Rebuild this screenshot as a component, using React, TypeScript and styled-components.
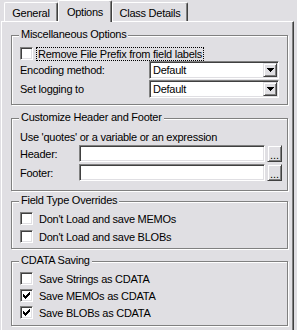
import styled, { createGlobalStyle } from "styled-components";

const Global = createGlobalStyle`
  html, body {
    margin: 0;
    padding: 0;
    background: #e0dfe3;
  }
  body {
    width: 297px;
    height: 330px;
    overflow: hidden;
    font-family: "Liberation Sans", Arial, sans-serif;
    font-size: 11px;
    letter-spacing: -0.25px;
    color: #000;
  }
`;

const Window = styled.div`
  padding-left: 1px;
`;

const TabStrip = styled.div`
  display: flex;
  align-items: flex-end;
  height: 21px;
  padding-left: 3px;
  position: relative;
  z-index: 1;
`;

const Tab = styled.div<{ $active?: boolean; $width: number }>`
  width: ${(p) => p.$width}px;
  height: ${(p) => (p.$active ? 22 : 19)}px;
  margin-bottom: ${(p) => (p.$active ? -1 : 0)}px;
  box-sizing: border-box;
  background: #e0dfe3;
  border-top: 1px solid #fff;
  border-left: 1px solid #fff;
  border-right: 1px solid #404040;
  border-top-left-radius: 2px;
  border-top-right-radius: 2px;
  box-shadow: inset -1px 0 0 #808080;
  display: flex;
  align-items: center;
  justify-content: center;
  padding-top: ${(p) => (p.$active ? 0 : 1)}px;
  white-space: nowrap;
`;

const Panel = styled.div`
  width: 293px;
  height: 309px;
  box-sizing: border-box;
  border-top: 1px solid #fff;
  border-left: 1px solid #fff;
  border-right: 1px solid #404040;
  box-shadow: inset -1px 0 0 #808080;
  padding: 13px 0 0 9px;
`;

const Group = styled.div<{ $top: number; $bottom: number; $gap: number; $mt?: number }>`
  position: relative;
  width: 277px;
  box-sizing: border-box;
  border: 1px solid #808080;
  box-shadow: inset 1px 1px 0 #fff, 1px 1px 0 #fff;
  display: flex;
  flex-direction: column;
  gap: ${(p) => p.$gap}px;
  padding: ${(p) => p.$top}px 0 ${(p) => p.$bottom}px 8px;
  margin-top: ${(p) => p.$mt ?? 0}px;
`;

const GroupTitle = styled.span`
  position: absolute;
  top: -8px;
  left: 7px;
  padding: 0 2px;
  line-height: 13px;
  background: #e0dfe3;
  white-space: nowrap;
`;

const CheckRow = styled.div`
  display: flex;
  align-items: center;
  height: 13px;
  white-space: nowrap;
`;

const Box = styled.span`
  width: 13px;
  height: 13px;
  box-sizing: border-box;
  flex: none;
  background: #fff;
  border: 1px solid;
  border-color: #808080 #fff #fff #808080;
  box-shadow: inset 1px 1px 0 #404040, inset -1px -1px 0 #e0dfe3;
  display: flex;
  align-items: center;
  justify-content: center;
  margin-right: 5px;
`;

const Label = styled.span<{ $focus?: boolean }>`
  line-height: 12px;
  padding: 0 1px;
  margin-left: ${(p) => (p.$focus ? -2 : -1)}px;
  border: 1px ${(p) => (p.$focus ? "dotted #000" : "solid transparent")};
`;

const FieldRow = styled.div<{ $h: number; $labelWidth: number }>`
  display: flex;
  align-items: center;
  height: ${(p) => p.$h}px;
  white-space: nowrap;

  & > span:first-child {
    width: ${(p) => p.$labelWidth}px;
    flex: none;
  }
`;

const Sunken = styled.div<{ $width: number }>`
  width: ${(p) => p.$width}px;
  height: 100%;
  box-sizing: border-box;
  background: #fff;
  border: 1px solid;
  border-color: #808080 #fff #fff #808080;
  box-shadow: inset 1px 1px 0 #404040, inset -1px -1px 0 #e0dfe3;
  display: flex;
  align-items: center;
  padding: 1px 1px 1px 3px;
`;

const ComboText = styled.span`
  flex: 1;
`;

const Raised = styled.div<{ $width: number }>`
  width: ${(p) => p.$width}px;
  height: 100%;
  flex: none;
  box-sizing: border-box;
  background: #e0dfe3;
  border: 1px solid;
  border-color: #e0dfe3 #404040 #404040 #e0dfe3;
  box-shadow: inset 1px 1px 0 #fff, inset -1px -1px 0 #808080;
  display: flex;
  align-items: center;
  justify-content: center;
`;

const Ellipsis = styled(Raised)`
  margin-left: 2px;
  align-items: flex-end;
  padding-bottom: 2px;
  line-height: 8px;
  letter-spacing: 0;
`;

const Check = () => (
  <svg width="7" height="7" viewBox="0 0 7 7" shapeRendering="crispEdges">
    {[2, 3, 4, 3, 2, 1, 0].map((y, x) => (
      <rect key={x} x={x} y={y} width="1" height="3" fill="#000" />
    ))}
  </svg>
);

const Arrow = () => (
  <svg width="7" height="4" viewBox="0 0 7 4" shapeRendering="crispEdges">
    <path d="M0 0h7v1H0zM1 1h5v1H1zM2 2h3v1H2zM3 3h1v1H3z" fill="#000" />
  </svg>
);

function CheckBox({ label, checked, focus }: { label: string; checked?: boolean; focus?: boolean }) {
  return (
    <CheckRow>
      <Box>{checked && <Check />}</Box>
      <Label $focus={focus}>{label}</Label>
    </CheckRow>
  );
}

function Combo({ label, value }: { label: string; value: string }) {
  return (
    <FieldRow $h={18} $labelWidth={129}>
      <span>{label}</span>
      <Sunken $width={130}>
        <ComboText>{value}</ComboText>
        <Raised $width={14}>
          <Arrow />
        </Raised>
      </Sunken>
    </FieldRow>
  );
}

function TextField({ label }: { label: string }) {
  return (
    <FieldRow $h={17} $labelWidth={59}>
      <span>{label}</span>
      <Sunken $width={186} />
      <Ellipsis $width={15}>...</Ellipsis>
    </FieldRow>
  );
}

export default function App() {
  return (
    <Window>
      <Global />
      <TabStrip>
        <Tab $width={54}>General</Tab>
        <Tab $width={54} $active>
          Options
        </Tab>
        <Tab $width={76}>Class Details</Tab>
      </TabStrip>
      <Panel>
        <Group $top={11} $bottom={6} $gap={1}>
          <GroupTitle>Miscellaneous Options</GroupTitle>
          <CheckBox label="Remove File Prefix from field labels" focus />
          <Combo label="Encoding method:" value="Default" />
          <Combo label="Set logging to" value="Default" />
        </Group>
        <Group $top={11} $bottom={9} $gap={2} $mt={13}>
          <GroupTitle>Customize Header and Footer</GroupTitle>
          <FieldRow $h={13} $labelWidth={260}>
            <span>Use 'quotes' or a variable or an expression</span>
          </FieldRow>
          <TextField label="Header:" />
          <TextField label="Footer:" />
        </Group>
        <Group $top={10} $bottom={5} $gap={5} $mt={10}>
          <GroupTitle>Field Type Overrides</GroupTitle>
          <CheckBox label="Don't Load and save MEMOs" />
          <CheckBox label="Don't Load and save BLOBs" />
        </Group>
        <Group $top={10} $bottom={6} $gap={4} $mt={12}>
          <GroupTitle>CDATA Saving</GroupTitle>
          <CheckBox label="Save Strings as CDATA" />
          <CheckBox label="Save MEMOs as CDATA" checked />
          <CheckBox label="Save BLOBs as CDATA" checked />
        </Group>
      </Panel>
    </Window>
  );
}
